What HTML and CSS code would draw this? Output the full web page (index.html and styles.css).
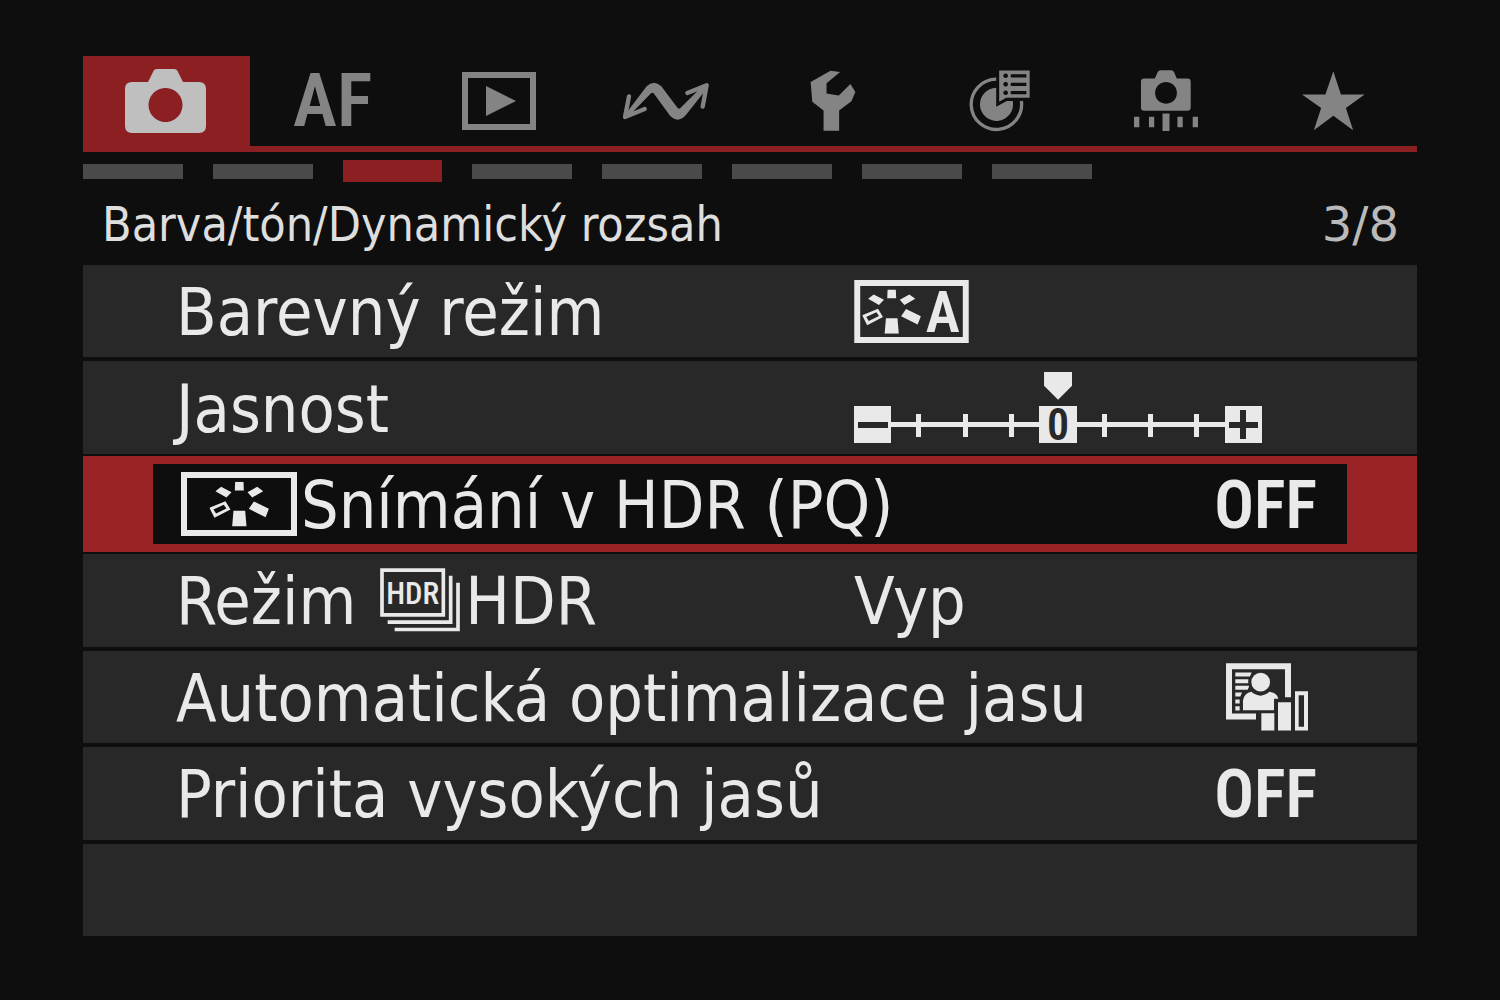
FILE: index.html
```html
<!DOCTYPE html>
<html lang="cs">
<head>
<meta charset="utf-8">
<meta name="viewport" content="width=device-width, initial-scale=1">
<title>Barva/tón/Dynamický rozsah</title>
<link rel="stylesheet" href="styles.css">
</head>
<body>
<svg class="defs" aria-hidden="true">
  <symbol id="style-rays" viewBox="65 57 178 134">
    <path fill="currentColor" fill-rule="evenodd" d="M142 57H167L168 83H141ZM83 85L100 72L131 88L116 104ZM179 88L208 72L226 85L193 104ZM183 138L198 116L243 138L233 163ZM137 144H172L176 191H133ZM65 135L113 115L128 140L80 165ZM77 140L85 152L116 137L108 126Z"/>
  </symbol>
</svg>
<main class="screen">
  <nav class="tabs" aria-label="Menu">
    <button class="tab tab-active" aria-label="Snímání">
      <svg width="81" height="64" viewBox="0 0 81 64"><path fill="currentColor" fill-rule="evenodd" d="M7 13H23L28 3Q29 0 32 0H49Q52 0 53 3L58 13H74Q81 13 81 20V57Q81 64 74 64H7Q0 64 0 57V20Q0 13 7 13ZM40 19A17 17 0 1 0 41 19Z"/></svg>
    </button>
    <button class="tab tab-text">AF</button>
    <button class="tab" aria-label="Přehrávání">
      <svg width="74" height="58" viewBox="0 0 74 58"><path fill="none" stroke="currentColor" stroke-width="6" d="M3 3H71V55H3Z"/><path fill="currentColor" d="M24 14L54 29L24 44Z"/></svg>
    </button>
    <button class="tab" aria-label="Komunikace">
      <svg width="88" height="38" viewBox="550 78 262 114"><path fill="currentColor" d="M558 176L623 91Q645 70 667 91L716 156Q720 160 725 155L793 88L803 98L740 178Q716 204 692 178L644 112Q640 108 636 112L566 184Z"/><path fill="none" stroke="currentColor" stroke-width="13" stroke-linecap="round" stroke-linejoin="round" d="M570 121L558 183L617 159M745 111L803 88L791 152"/></svg>
    </button>
    <button class="tab" aria-label="Nastavení">
      <svg width="46" height="61" viewBox="62 44 137 184"><path fill="currentColor" d="M123 46L152 50L111 84V115L148 121L183 86L198 110L186 138L149 166V227H102V166L68 140L63 80Z"/></svg>
    </button>
    <button class="tab" aria-label="Uživatelské ovládání">
      <svg width="61" height="61" viewBox="536 43 184 183"><path fill="none" stroke="currentColor" stroke-width="10" d="M618 70A76 76 0 1 0 694 136"/><path fill="currentColor" d="M618 96A50 50 0 1 0 668 136H650L618 153Z"/><path fill="currentColor" fill-rule="evenodd" d="M627 44H719V126H648L627 138ZM662 55V65H709V55ZM662 81V91H709V81ZM662 106V116H709V106ZM646 53A7 7 0 1 0 647 53ZM646 79A7 7 0 1 0 647 79ZM646 104A7 7 0 1 0 647 104Z"/></svg>
    </button>
    <button class="tab" aria-label="Uživatelské funkce">
      <svg width="64" height="61" viewBox="72 44 193 184"><path fill="currentColor" fill-rule="evenodd" d="M103 70H135L143 51Q146 45 152 45H185Q190 45 193 51L201 70H233Q243 70 243 80V157Q243 167 233 167H103Q93 167 93 157V80Q93 70 103 70ZM168 80A33 33 0 1 0 169 80Z"/><path fill="currentColor" d="M72 185H88V217H72ZM117 185H133V217H117ZM158 175H179V228H158ZM203 185H219V217H203ZM249 185H265V217H249Z"/></svg>
    </button>
    <button class="tab" aria-label="Moje menu">
      <svg width="63" height="60" viewBox="573 46 191 180"><path fill="currentColor" d="M668 46L691 116H763L706 157L728 225L668 181L609 225L631 157L573 116H644Z"/></svg>
    </button>
  </nav>

  <nav class="pages" aria-label="Stránky">
    <button class="page" aria-label="1"></button>
    <button class="page" aria-label="2"></button>
    <button class="page page-active" aria-label="3" aria-current="page"></button>
    <button class="page" aria-label="4"></button>
    <button class="page" aria-label="5"></button>
    <button class="page" aria-label="6"></button>
    <button class="page" aria-label="7"></button>
    <button class="page" aria-label="8"></button>
  </nav>

  <header class="heading">
    <h1 class="title">Barva/tón/Dynamický rozsah</h1>
    <span class="count">3/8</span>
  </header>

  <div class="list">
    <button class="row row-split">
      <span class="text">Barevný režim</span>
      <svg width="115" height="63" viewBox="41 28 347 191"><path fill="none" stroke="currentColor" stroke-width="18" d="M50 37H379V210H50Z"/><use href="#style-rays" x="65" y="57" width="178" height="134"/><text class="style-letter" x="309" y="186" text-anchor="middle">A</text></svg>
    </button>
    <div class="row row-split">
      <label class="text" for="clarity">Jasnost</label>
      <div class="scale">
        <input class="range" id="clarity" type="range" min="-4" max="4" value="0">
        <svg width="408" height="38" viewBox="0 0 408 38"><path fill="currentColor" fill-rule="evenodd" d="M0 0H37V37H0ZM4 16V22H34V16ZM371 0H408V37H371ZM375 16V22H386V33H392V22H404V16H392V4H386V16Z"/><path fill="currentColor" d="M37 16H371V21H37ZM62 8H67V31H62ZM109 8H114V31H109ZM155 8H160V31H155ZM248 8H253V31H248ZM294 8H299V31H294ZM340 8H345V31H340ZM185 0H223V37H185Z"/><text class="scale-zero" x="204" y="34" text-anchor="middle">0</text></svg>
      </div>
    </div>
    <button class="row row-selected">
      <span class="label"><svg width="116" height="64" viewBox="41 28 347 191"><path fill="none" stroke="currentColor" stroke-width="18" d="M50 37H379V210H50Z"/><use href="#style-rays" x="126" y="57" width="178" height="134"/></svg><span class="text">Snímání v HDR (PQ)</span></span>
      <span class="text off">OFF</span>
    </button>
    <button class="row row-split">
      <span class="label label-hdr"><span class="text">Režim</span><svg width="80" height="64" viewBox="63 41 240 191"><path fill="none" stroke="currentColor" stroke-width="11" d="M69 47H253V181H69ZM86 203H275V64M107 225H297V85"/><text class="hdr-text" x="161" y="149" text-anchor="middle">HDR</text></svg><span class="text">HDR</span></span>
      <span class="text">Vyp</span>
    </button>
    <button class="row">
      <span class="text">Automatická optimalizace jasu</span>
      <svg class="optimizer" width="82" height="68" viewBox="78 38 246 203"><path fill="none" stroke="currentColor" stroke-width="18" d="M264 140V47H87V198H168"/><path fill="currentColor" d="M106 66H155L150 78H106ZM106 86H145V98H106ZM106 106H148L143 118H106ZM106 126H126L121 138H106ZM106 147H119V159H106ZM106 167H119V180H106Z"/><path class="cutout" d="M129 179V150Q133 127 154 124Q182 147 208 124Q232 126 235 145H222V179Z"/><circle class="cutout" cx="182" cy="95" r="28"/><path fill="currentColor" d="M184 188H223V240H184ZM234 155H273V240H234Z"/><path fill="currentColor" fill-rule="evenodd" d="M285 122H324V240H285ZM296 134V229H312V134Z"/></svg>
    </button>
    <button class="row">
      <span class="text">Priorita vysokých jasů</span>
      <span class="text off">OFF</span>
    </button>
    <div class="row"></div>
  </div>
</main>
</body>
</html>
```
FILE: styles.css
```css
* { box-sizing: border-box; }

body {
  margin: 0;
  background: #0e0e0e;
  color: #e9e9e9;
  font-family: "DejaVu Sans Condensed", "DejaVu Sans", sans-serif;
}

button {
  padding: 0;
  border: 0;
  color: inherit;
  font: inherit;
  text-align: left;
  cursor: pointer;
}

svg { display: block; flex: none; overflow: visible; }
.defs { position: absolute; width: 0; height: 0; }

.screen {
  display: flex;
  flex-direction: column;
  min-height: 100vh;
  padding: 56px 83px 64px;
}

.tabs {
  display: grid;
  grid-template-columns: repeat(8, 1fr);
  height: 96px;
  border-bottom: 6px solid #8b1f22;
}

.tab {
  display: flex;
  align-items: center;
  justify-content: center;
  padding: 0 1px 1px 0;
  background: none;
  color: #848484;
}

.tab-active { background: #8b1f22; color: #bfbfbf; }

.tab-text,
.off,
.style-letter,
.scale-zero,
.hdr-text {
  font-family: "Roboto Condensed", "Open Sans Condensed", sans-serif;
  font-weight: 600;
}

.tab-text { font-size: 74px; line-height: 88px; }

.pages {
  display: grid;
  grid-template-columns: repeat(8, 1fr);
  gap: 30px;
  align-items: center;
  width: 75.6%;
  height: 22px;
  margin-top: 8px;
}

.page { height: 15px; background: #4a4a4a; }
.page-active { height: 22px; background: #8b1f22; }

.heading {
  display: flex;
  align-items: center;
  justify-content: space-between;
  height: 83px;
  padding: 0 18px 0 19px;
  font-size: 48px;
  line-height: 80px;
}

.title { margin: 0; font-size: 48px; font-weight: 400; color: #dedede; }
.count { font-family: "DejaVu Sans", sans-serif; color: #bababa; }

.list {
  display: grid;
  flex: 1;
  grid-auto-rows: minmax(92px, 1fr);
  gap: 4px;
}

.row {
  display: flex;
  align-items: center;
  justify-content: space-between;
  padding: 0 100px 0 93px;
  background: #282828;
  font-size: 66px;
  line-height: 76px;
  white-space: nowrap;
}

.row-split {
  display: grid;
  grid-template-columns: 57.8% 1fr;
  padding: 0;
}

.row-split > :first-child { padding-left: 93px; }

.row-selected {
  margin: -2px 0;
  padding: 0 30px 0 28px;
  border: solid #9a2325;
  border-width: 8px 70px;
  background: #0e0e0e;
}

.text { padding-top: 4px; }
.label { display: flex; align-items: center; gap: 4px; }
.label-hdr { gap: 5px; }
.label-hdr svg { margin-left: 19px; }
.optimizer { margin-right: 9px; }

.cutout {
  fill: currentColor;
  stroke: #282828;
  stroke-width: 16px;
  paint-order: stroke;
}

.scale { display: grid; gap: 6px; width: 408px; }

.range {
  width: 400px;
  height: 28px;
  margin: 0 4px;
  background: none;
  appearance: none;
}

.range::-webkit-slider-thumb {
  width: 28px;
  height: 28px;
  background: #e9e9e9;
  clip-path: polygon(0 0, 100% 0, 100% 50%, 50% 100%, 0 50%);
  appearance: none;
}

.style-letter { fill: currentColor; font-size: 174px; }
.scale-zero { fill: #282828; font-size: 44px; }
.hdr-text { fill: currentColor; font-size: 92px; font-weight: 500; }
```
